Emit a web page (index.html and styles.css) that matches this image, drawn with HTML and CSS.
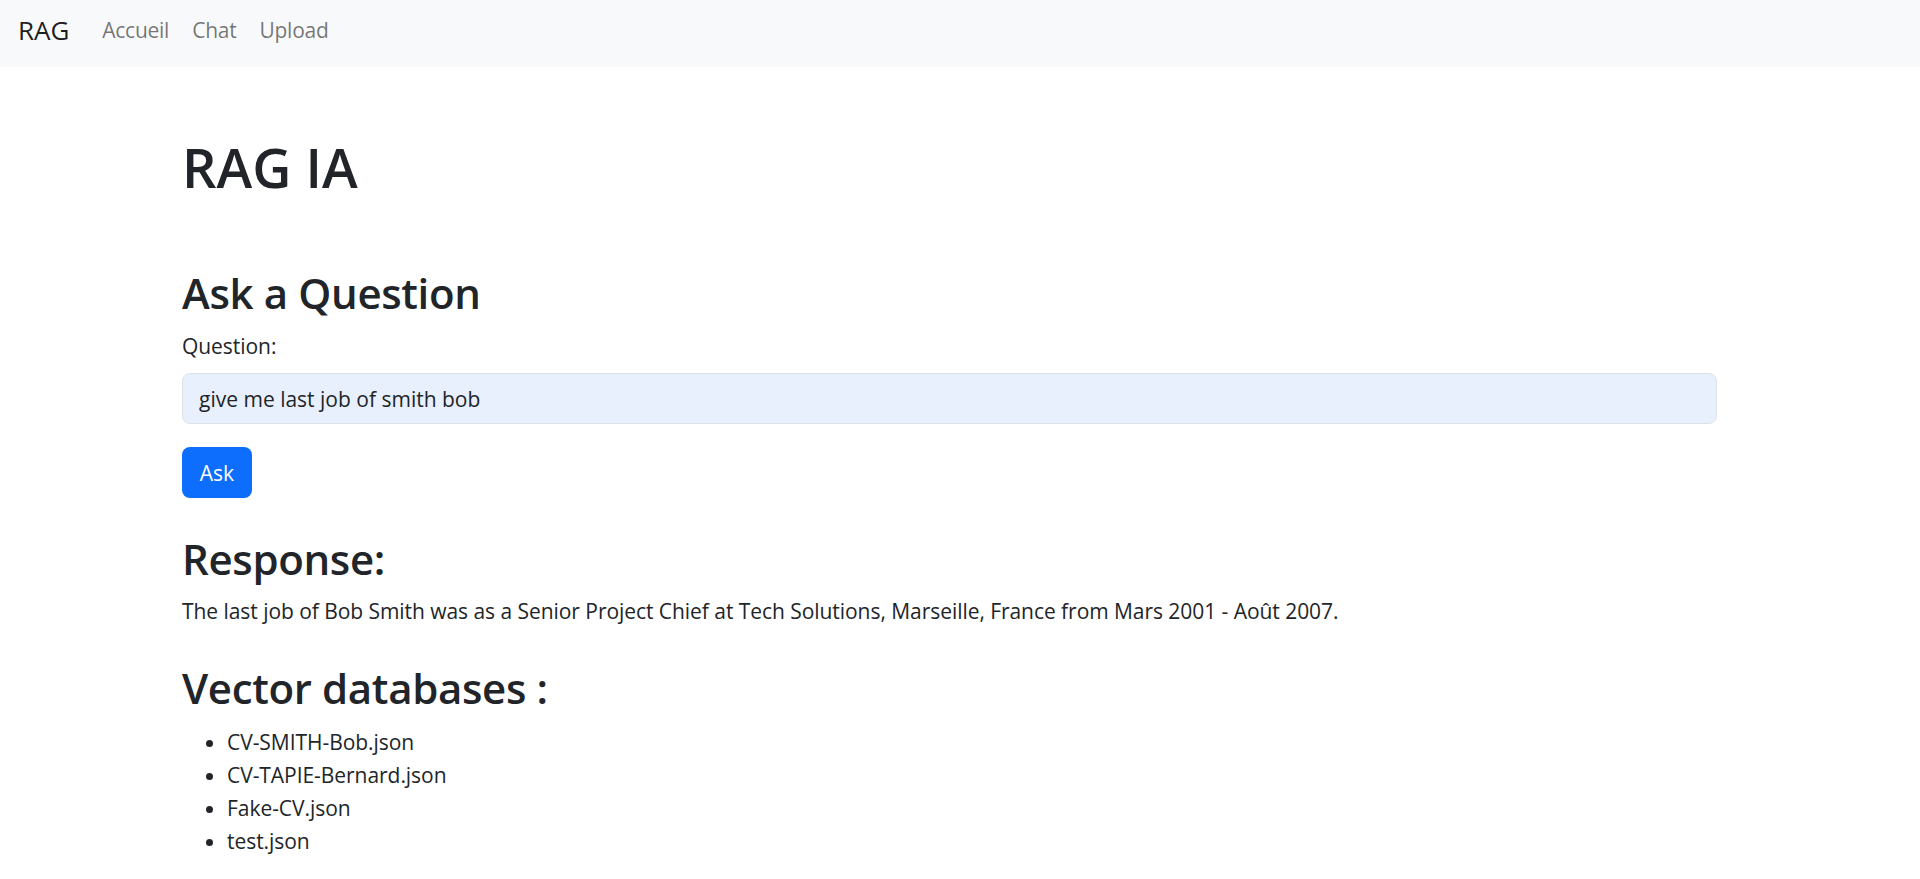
FILE: index.html
```html
<!DOCTYPE html>
<html lang="fr">
<head>
<meta charset="utf-8">
<title>RAG IA</title>
<link rel="stylesheet" href="styles.css">
</head>
<body>
<nav class="navbar">
  <a class="brand" href="#">RAG</a>
  <ul class="nav-links">
    <li><a href="#">Accueil</a></li>
    <li><a href="#">Chat</a></li>
    <li><a href="#">Upload</a></li>
  </ul>
</nav>
<main class="container">
  <h1 class="title">RAG IA</h1>
  <section class="ask">
    <h2 class="heading">Ask a Question</h2>
    <form class="ask-form">
      <label class="label" for="q">Question:</label>
      <input class="input" id="q" type="text" value="give me last job of smith bob">
      <button class="btn" type="button">Ask</button>
    </form>
  </section>
  <section class="response">
    <h2 class="heading">Response:</h2>
    <p class="answer">The last job of Bob Smith was as a Senior Project Chief at Tech Solutions, Marseille, France from Mars 2001 - Août 2007.</p>
  </section>
  <section class="dbs">
    <h2 class="heading">Vector databases :</h2>
    <ul class="db-list">
      <li>CV-SMITH-Bob.json</li>
      <li>CV-TAPIE-Bernard.json</li>
      <li>Fake-CV.json</li>
      <li>test.json</li>
    </ul>
  </section>
</main>
</body>
</html>
```

FILE: styles.css
```css
* { box-sizing: border-box; }
html { overflow-y: scroll; }
html, body { margin: 0; padding: 0; }
body {
  font-family: "Open Sans", "Noto Sans", sans-serif;
  font-size: 21px;
  line-height: 32px;
  letter-spacing: -0.05px;
  color: #212529;
  background: #fff;
}
a { text-decoration: none; }

.navbar {
  height: 67px;
  background: #f8f9fa;
  display: flex;
  align-items: center;
  padding: 0 18px 8px 18px;
}
.brand {
  font-size: 26px;
  color: rgba(0, 0, 0, 0.9);
  margin-right: 33px;
}
.nav-links {
  display: flex;
  gap: 23px;
  list-style: none;
  margin: 0;
  padding: 0;
}
.nav-links a {
  color: rgba(0, 0, 0, 0.55);
  font-size: 21px;
  letter-spacing: -0.25px;
}

.container {
  width: 1535px;
  margin-left: 182px;
  padding-bottom: 20px;
}
.title {
  font-size: 54px;
  line-height: 64px;
  font-weight: 600;
  letter-spacing: 0;
  margin: 68px 0 0 0;
}
.heading {
  font-size: 42px;
  line-height: 51px;
  font-weight: 600;
  letter-spacing: -0.35px;
  margin: 0;
}
.ask { margin-top: 68px; }
.ask-form { display: flex; flex-direction: column; align-items: flex-start; }
.label { margin: 12px 0 0 0; }
.input {
  margin-top: 11px;
  width: 100%;
  height: 51px;
  padding: 0 16px;
  font: inherit;
  font-size: 21px;
  color: #212529;
  background: #e8f0fe;
  border: 1px solid #dee2e6;
  border-radius: 8px;
  outline: none;
}
.btn {
  margin-top: 23px;
  height: 51px;
  width: 70px;
  padding: 0;
  font: inherit;
  font-size: 21px;
  color: #fff;
  background: #0d6efd;
  border: 0;
  border-radius: 8px;
}
.response { margin-top: 35px; }
.answer { margin: 11px 0 0 0; }
.dbs { margin-top: 35px; }
.db-list {
  margin: 13px 0 0 0;
  padding-left: 45px;
  line-height: 33px;
}
```
